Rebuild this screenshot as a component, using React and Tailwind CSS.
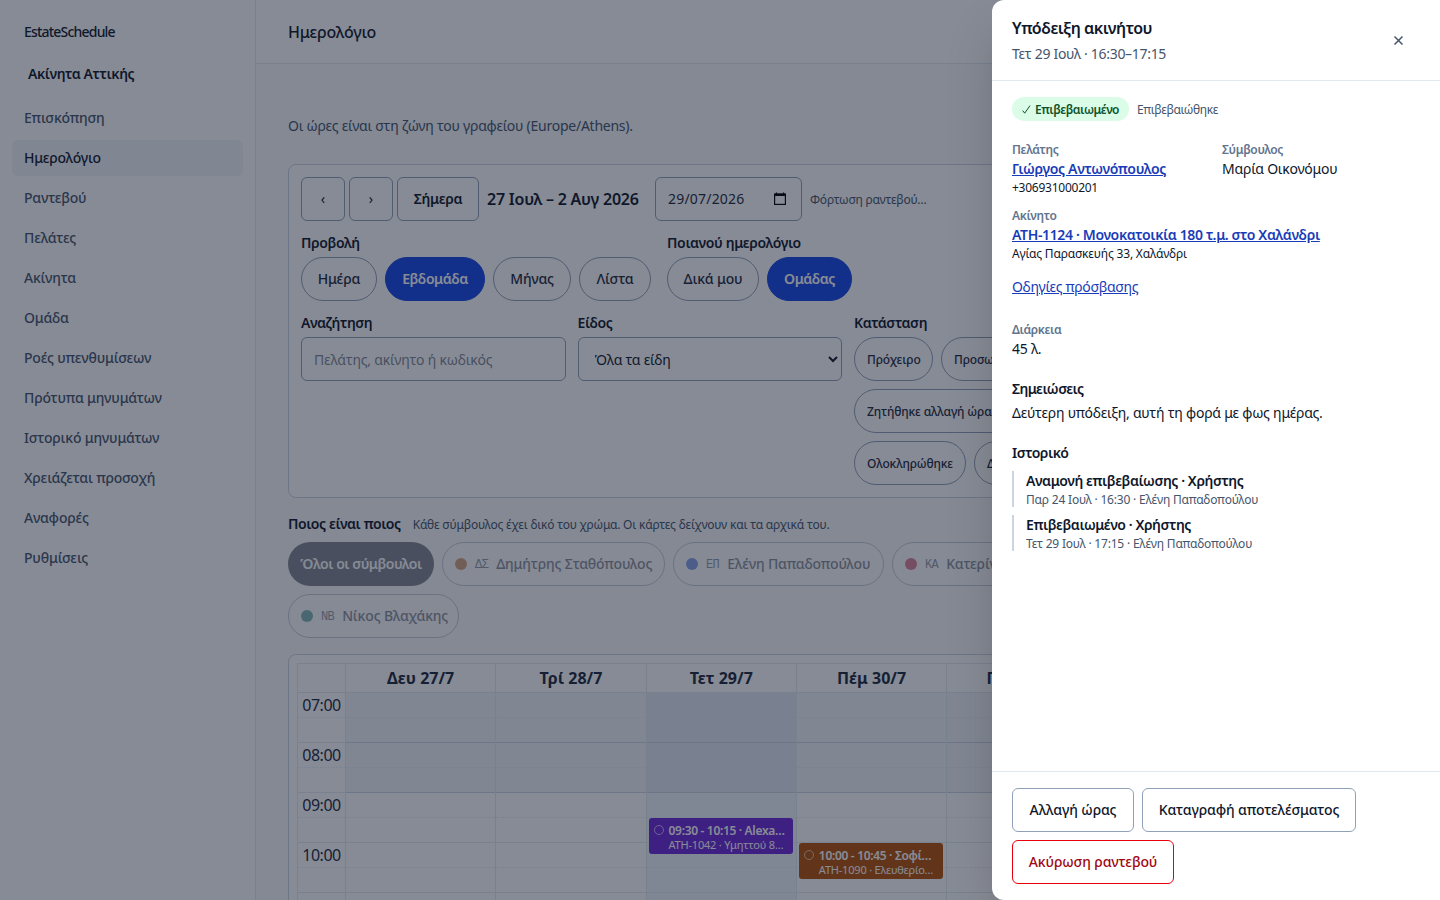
const NAV = [
  'Επισκόπηση',
  'Ημερολόγιο',
  'Ραντεβού',
  'Πελάτες',
  'Ακίνητα',
  'Ομάδα',
  'Ροές υπενθυμίσεων',
  'Πρότυπα μηνυμάτων',
  'Ιστορικό μηνυμάτων',
  'Χρειάζεται προσοχή',
  'Αναφορές',
  'Ρυθμίσεις',
]

const VIEWS = [
  { label: 'Ημέρα', width: 'w-[76px]' },
  { label: 'Εβδομάδα', width: 'w-[100px]', active: true },
  { label: 'Μήνας', width: 'w-[78px]' },
  { label: 'Λίστα', width: 'w-[72px]' },
]

const SCOPES = [
  { label: 'Δικά μου', width: 'w-[92px]' },
  { label: 'Ομάδας', width: 'w-[85px]', active: true },
]

const STATUSES = [
  { label: 'Πρόχειρο', width: 'w-[79px]' },
  { label: 'Προσωρινό', width: 'w-[94px]' },
  { label: 'Αναμονή επιβεβαίωσης', width: 'w-[166px]' },
  { label: 'Επιβεβαιωμένο', width: 'w-[124px]' },
  { label: 'Ζητήθηκε αλλαγή ώρας', width: 'w-[164px]' },
  { label: 'Ζητήθηκε ακύρωση', width: 'w-[146px]' },
  { label: 'Ακυρώθηκε από πελάτη', width: 'w-[172px]' },
  { label: 'Ολοκληρώθηκε', width: 'w-[112px]' },
  { label: 'Δεν εμφανίστηκε', width: 'w-[130px]' },
]

const AGENTS = [
  { initials: 'ΔΣ', name: 'Δημήτρης Σταθόπουλος', dot: 'bg-[#b45309]', width: 'w-[223px]' },
  { initials: 'ΕΠ', name: 'Ελένη Παπαδοπούλου', dot: 'bg-[#1d4ed8]', width: 'w-[211px]' },
  { initials: 'ΚΑ', name: 'Κατερίνα Αλεξίου', dot: 'bg-[#be123c]', width: 'w-[186px]' },
  { initials: 'ΜΟ', name: 'Μαρία Οικονόμου', dot: 'bg-[#6d28d9]', width: 'w-[186px]' },
  { initials: 'ΝΒ', name: 'Νίκος Βλαχάκης', dot: 'bg-[#0f766e]', width: 'w-[171px]' },
]

const DAYS = [
  { label: 'Δευ 27/7' },
  { label: 'Τρί 28/7' },
  {
    label: 'Τετ 29/7',
    today: true,
    event: { top: 'top-[125px]', color: 'bg-[#6d28d9]', title: '09:30 - 10:15 · Alexa…', place: 'ATH-1042 · Υμηττού 8…' },
  },
  {
    label: 'Πέμ 30/7',
    event: { top: 'top-[150px]', color: 'bg-[#b45309]', title: '10:00 - 10:45 · Σοφί…', place: 'ATH-1090 · Ελευθερίο…' },
  },
  { label: 'Παρ 31/7' },
  { label: 'Σάβ 1/8' },
  { label: 'Κυρ 2/8' },
]

const HOURS = ['07:00', '08:00', '09:00', '10:00']

const HISTORY = [
  { title: 'Αναμονή επιβεβαίωσης · Χρήστης', meta: 'Παρ 24 Ιουλ · 16:30 · Ελένη Παπαδοπούλου' },
  { title: 'Επιβεβαιωμένο · Χρήστης', meta: 'Τετ 29 Ιουλ · 17:15 · Ελένη Παπαδοπούλου' },
]

function Chip({ label, width, active }) {
  return (
    <button
      className={`h-11 shrink-0 whitespace-nowrap rounded-full border text-sm ${width} ${
        active
          ? 'border-blue-700 bg-blue-700 font-semibold tracking-[-0.4px] text-white'
          : 'border-slate-400 bg-white font-medium tracking-[-0.15px] text-slate-800'
      }`}
    >
      {label}
    </button>
  )
}

function Sidebar() {
  return (
    <aside className="w-64 shrink-0 border-r border-slate-200 bg-white px-3">
      <div className="flex h-16 items-center px-3 text-sm font-medium tracking-[-0.8px] text-slate-900">EstateSchedule</div>
      <div className="flex h-5 items-center px-4 text-sm font-semibold tracking-[-0.4px] text-slate-900">Ακίνητα Αττικής</div>
      <nav className="mt-4 flex flex-col gap-1">
        {NAV.map((item) => (
          <a
            key={item}
            className={`flex h-9 items-center rounded-md px-3 text-sm font-medium tracking-[-0.2px] ${
              item === 'Ημερολόγιο' ? 'bg-slate-100 text-slate-900' : 'text-slate-600'
            }`}
          >
            {item}
          </a>
        ))}
      </nav>
    </aside>
  )
}

function Filters() {
  return (
    <section className="mt-7 rounded-lg border border-slate-300 bg-white p-3">
      <div className="flex items-center">
        <button className="h-11 w-11 rounded-md border border-slate-400 text-sm">‹</button>
        <button className="ml-1 h-11 w-11 rounded-md border border-slate-400 text-sm">›</button>
        <button className="ml-1 h-11 w-[82px] rounded-md border border-slate-400 text-sm font-semibold tracking-[-0.3px]">Σήμερα</button>
        <h2 className="ml-2 w-[160px] whitespace-nowrap text-base font-semibold tracking-[-0.22px]">27 Ιουλ – 2 Αυγ 2026</h2>
        <div className="ml-2 flex h-11 w-[147px] items-center justify-between rounded-md border border-slate-400 px-3 text-sm text-slate-800">
          <span className="tracking-[0.2px]">29/07/2026</span>
          <svg className="mr-[2px] size-[14px]" viewBox="0 0 14 14" fill="none" stroke="#000" strokeWidth="1.2">
            <rect x="1.6" y="2.1" width="10.8" height="10.3" />
            <path d="M1.6 2.8h10.8" strokeWidth="2.4" />
            <path d="M3.5 0.5v2M10.5 0.5v2" />
          </svg>
        </div>
        <span className="ml-2 translate-y-px text-xs tracking-[-0.25px] text-slate-600">Φόρτωση ραντεβού…</span>
      </div>

      <div className="mt-3 flex gap-4">
        <div>
          <div className="text-sm font-semibold tracking-[-0.35px]">Προβολή</div>
          <div className="mt-1 flex gap-2">
            {VIEWS.map((v) => (
              <Chip key={v.label} {...v} />
            ))}
          </div>
        </div>
        <div>
          <div className="text-sm font-semibold tracking-[-0.35px]">Ποιανού ημερολόγιο</div>
          <div className="mt-1 flex gap-2">
            {SCOPES.map((s) => (
              <Chip key={s.label} {...s} />
            ))}
          </div>
        </div>
      </div>

      <div className="mt-3 grid grid-cols-4 gap-3">
        <label className="block">
          <span className="block text-sm font-semibold tracking-[-0.42px]">Αναζήτηση</span>
          <input
            className="mt-1 block h-11 w-full rounded-md border border-slate-400 px-3 text-sm tracking-[-0.2px] placeholder:text-gray-500/85"
            placeholder="Πελάτης, ακίνητο ή κωδικός"
          />
        </label>
        <label className="block">
          <span className="block text-sm font-semibold tracking-[-0.4px]">Είδος</span>
          <select className="mt-1 block h-11 w-full rounded-md border border-slate-400 bg-white px-3 text-sm tracking-[-0.25px]">
            <option>Όλα τα είδη</option>
          </select>
        </label>
        <div className="col-span-2">
          <div className="text-sm font-semibold tracking-[-0.38px]">Κατάσταση</div>
          <div className="mt-1 flex flex-wrap gap-2">
            {STATUSES.map((s) => (
              <button
                key={s.label}
                className={`h-11 whitespace-nowrap rounded-full border border-slate-400 pl-3 text-left text-xs font-medium tracking-[-0.15px] text-slate-800 ${s.width}`}
              >
                <span className="block translate-y-px">{s.label}</span>
              </button>
            ))}
          </div>
        </div>
      </div>
    </section>
  )
}

function Legend() {
  return (
    <section className="mt-4">
      <div className="flex h-5 items-center gap-3">
        <h2 className="text-sm font-semibold tracking-[-0.41px]">Ποιος είναι ποιος</h2>
        <p className="translate-y-px text-xs tracking-[-0.2px] text-slate-600">
          Κάθε σύμβουλος έχει δικό του χρώμα. Οι κάρτες δείχνουν και τα αρχικά του.
        </p>
      </div>
      <div className="mt-2 flex flex-wrap gap-2">
        <button className="h-11 w-[146px] whitespace-nowrap rounded-full bg-slate-900 text-sm font-semibold tracking-[-0.5px] text-white opacity-50">
          Όλοι οι σύμβουλοι
        </button>
        {AGENTS.map((a) => (
          <button
            key={a.initials}
            className={`flex h-11 items-center gap-2 whitespace-nowrap rounded-full border border-slate-400 bg-white pl-3 opacity-50 ${a.width}`}
          >
            <span className={`size-3 rounded-full ${a.dot}`} />
            <span className="translate-y-px font-['Liberation_Mono',monospace] text-xs tracking-[-0.6px] text-slate-700">{a.initials}</span>
            <span className="text-sm font-medium tracking-[-0.17px] text-slate-800">{a.name}</span>
          </button>
        ))}
      </div>
    </section>
  )
}

function Event({ top, color, title, place }) {
  return (
    <div className={`absolute left-[2px] right-[3px] flex h-9 gap-[5px] overflow-hidden whitespace-nowrap rounded-[3px] px-[5px] pt-1 text-white ${top} ${color}`}>
      <span className="mt-[3px] size-[10px] shrink-0 rounded-full border border-white/60" />
      <div className="min-w-0 flex-1">
        <div className="text-xs font-semibold leading-[17px] tracking-[-0.32px]">{title}</div>
        <div className="text-[11px] leading-[12px] tracking-[-0.2px]">{place}</div>
      </div>
    </div>
  )
}

function Week() {
  return (
    <section className="mt-4 rounded-lg border border-slate-300 bg-white p-2">
      <div className="mr-px flex border-l border-t border-slate-200">
        <div className="w-12 shrink-0 border-r border-slate-200">
          <div className="h-[29px] border-b border-slate-200" />
          {HOURS.map((h) => (
            <div key={h} className="h-[50px] border-b border-slate-200 text-center text-base tracking-[-0.5px] text-slate-800">
              <div className="h-[25px] border-b border-dotted border-slate-200 leading-[25px]">{h}</div>
            </div>
          ))}
          <div className="h-[25px]" />
        </div>
        {DAYS.map((d) => (
          <div key={d.label} className="min-w-0 flex-1 border-r border-slate-200">
            <div className="flex h-[29px] items-center justify-center border-b border-slate-200 text-base font-bold text-slate-800">
              {d.label}
            </div>
            <div className={`relative h-full ${d.today ? 'bg-blue-50' : ''}`}>
              {HOURS.map((h, i) => (
                <div
                  key={h}
                  className={`h-[50px] border-b ${
                    i >= 2 ? 'border-slate-200' : d.today ? 'border-slate-300 bg-slate-700/6' : 'border-slate-300 bg-slate-100'
                  }`}
                >
                  <div className="h-[25px] border-b border-dotted border-slate-200" />
                </div>
              ))}
              {d.event && <Event {...d.event} />}
            </div>
          </div>
        ))}
      </div>
    </section>
  )
}

function Field({ label, children }) {
  return (
    <div>
      <dt className="translate-y-px pb-0.5 text-xs font-semibold tracking-[-0.35px] text-slate-500">{label}</dt>
      <dd className="text-sm tracking-[-0.23px]">{children}</dd>
    </div>
  )
}

function Drawer() {
  return (
    <aside className="absolute inset-y-0 right-0 flex w-[448px] flex-col rounded-l-xl bg-white text-slate-900 shadow-2xl">
      <header className="flex items-center justify-between border-b border-slate-200 px-5 py-4">
        <div>
          <h2 className="text-base font-semibold tracking-[-0.49px]">Υπόδειξη ακινήτου</h2>
          <p className="mt-1 text-sm tracking-[-0.3px] text-slate-600">Τετ 29 Ιουλ · 16:30–17:15</p>
        </div>
        <button className="flex size-11 items-center justify-center text-slate-600">
          <svg className="size-[9px]" viewBox="0 0 9 9" fill="none" stroke="currentColor" strokeWidth="1.5">
            <path d="M0.5 0.5l8 8M8.5 0.5l-8 8" />
          </svg>
        </button>
      </header>

      <div className="flex-1 px-5 py-4">
        <div className="flex items-center gap-2">
          <span className="flex h-6 w-[117px] items-center justify-center gap-1 whitespace-nowrap rounded-full bg-green-100 text-xs font-semibold tracking-[-0.45px] text-green-900">
            <svg className="size-[9px]" viewBox="0 0 9 9" fill="none" stroke="currentColor">
              <path d="M0.7 5.6l2 2.6L8 0.6" />
            </svg>
            <span className="translate-y-px">Επιβεβαιωμένο</span>
          </span>
          <span className="translate-y-px text-xs tracking-[-0.4px] text-slate-600">Επιβεβαιώθηκε</span>
        </div>

        <dl className="mt-5 grid grid-cols-2 gap-3">
          <Field label="Πελάτης">
            <a className="block font-semibold tracking-[-0.3px] text-blue-800 underline">Γιώργος Αντωνόπουλος</a>
            <span className="block translate-y-px text-xs tracking-[-0.25px]">+306931000201</span>
          </Field>
          <Field label="Σύμβουλος">Μαρία Οικονόμου</Field>
          <div className="col-span-2">
            <Field label="Ακίνητο">
              <a className="block font-semibold tracking-[-0.35px] text-blue-800 underline">ATH-1124 · Μονοκατοικία 180 τ.μ. στο Χαλάνδρι</a>
              <span className="block translate-y-px text-xs tracking-[-0.18px]">Αγίας Παρασκευής 33, Χαλάνδρι</span>
              <a className="mt-4 block tracking-[-0.33px] text-blue-800 underline">Οδηγίες πρόσβασης</a>
            </Field>
          </div>
          <div className="mt-3">
            <Field label="Διάρκεια">45 λ.</Field>
          </div>
        </dl>

        <h3 className="mt-5 text-sm font-semibold tracking-[-0.55px]">Σημειώσεις</h3>
        <p className="mt-1 text-sm tracking-[-0.23px]">Δεύτερη υπόδειξη, αυτή τη φορά με φως ημέρας.</p>

        <h3 className="mt-5 text-sm font-semibold tracking-[-0.5px]">Ιστορικό</h3>
        <ol className="mt-2 space-y-2">
          {HISTORY.map((h) => (
            <li key={h.title} className="border-l-2 border-slate-300 pl-3">
              <div className="text-sm font-semibold tracking-[-0.42px]">{h.title}</div>
              <div className="translate-y-px text-xs tracking-[-0.2px] text-slate-600">{h.meta}</div>
            </li>
          ))}
        </ol>
      </div>

      <footer className="flex flex-wrap gap-2 border-t border-slate-200 px-5 py-4 text-sm font-medium tracking-[-0.12px]">
        <button className="h-11 w-[122px] whitespace-nowrap rounded-md border border-slate-400">Αλλαγή ώρας</button>
        <button className="h-11 w-[214px] whitespace-nowrap rounded-md border border-slate-400">Καταγραφή αποτελέσματος</button>
        <button className="h-11 w-[162px] whitespace-nowrap rounded-md border border-red-600 text-red-800">Ακύρωση ραντεβού</button>
      </footer>
    </aside>
  )
}

export default function App() {
  return (
    <div className="relative h-[900px] w-[1440px] overflow-hidden font-['Noto_Sans',sans-serif] text-slate-900">
      <div className="flex h-full">
        <Sidebar />
        <div className="min-w-0 flex-1 bg-slate-50">
          <header className="flex h-16 items-center border-b border-slate-200 bg-white px-8">
            <h1 className="text-base font-medium tracking-[-0.2px]">Ημερολόγιο</h1>
          </header>
          <main className="px-8 pt-[52px]">
            <p className="text-sm tracking-[-0.25px] text-slate-600">Οι ώρες είναι στη ζώνη του γραφείου (Europe/Athens).</p>
            <Filters />
            <Legend />
            <Week />
          </main>
        </div>
      </div>
      <div className="absolute inset-0 bg-slate-900/50" />
      <Drawer />
    </div>
  )
}
